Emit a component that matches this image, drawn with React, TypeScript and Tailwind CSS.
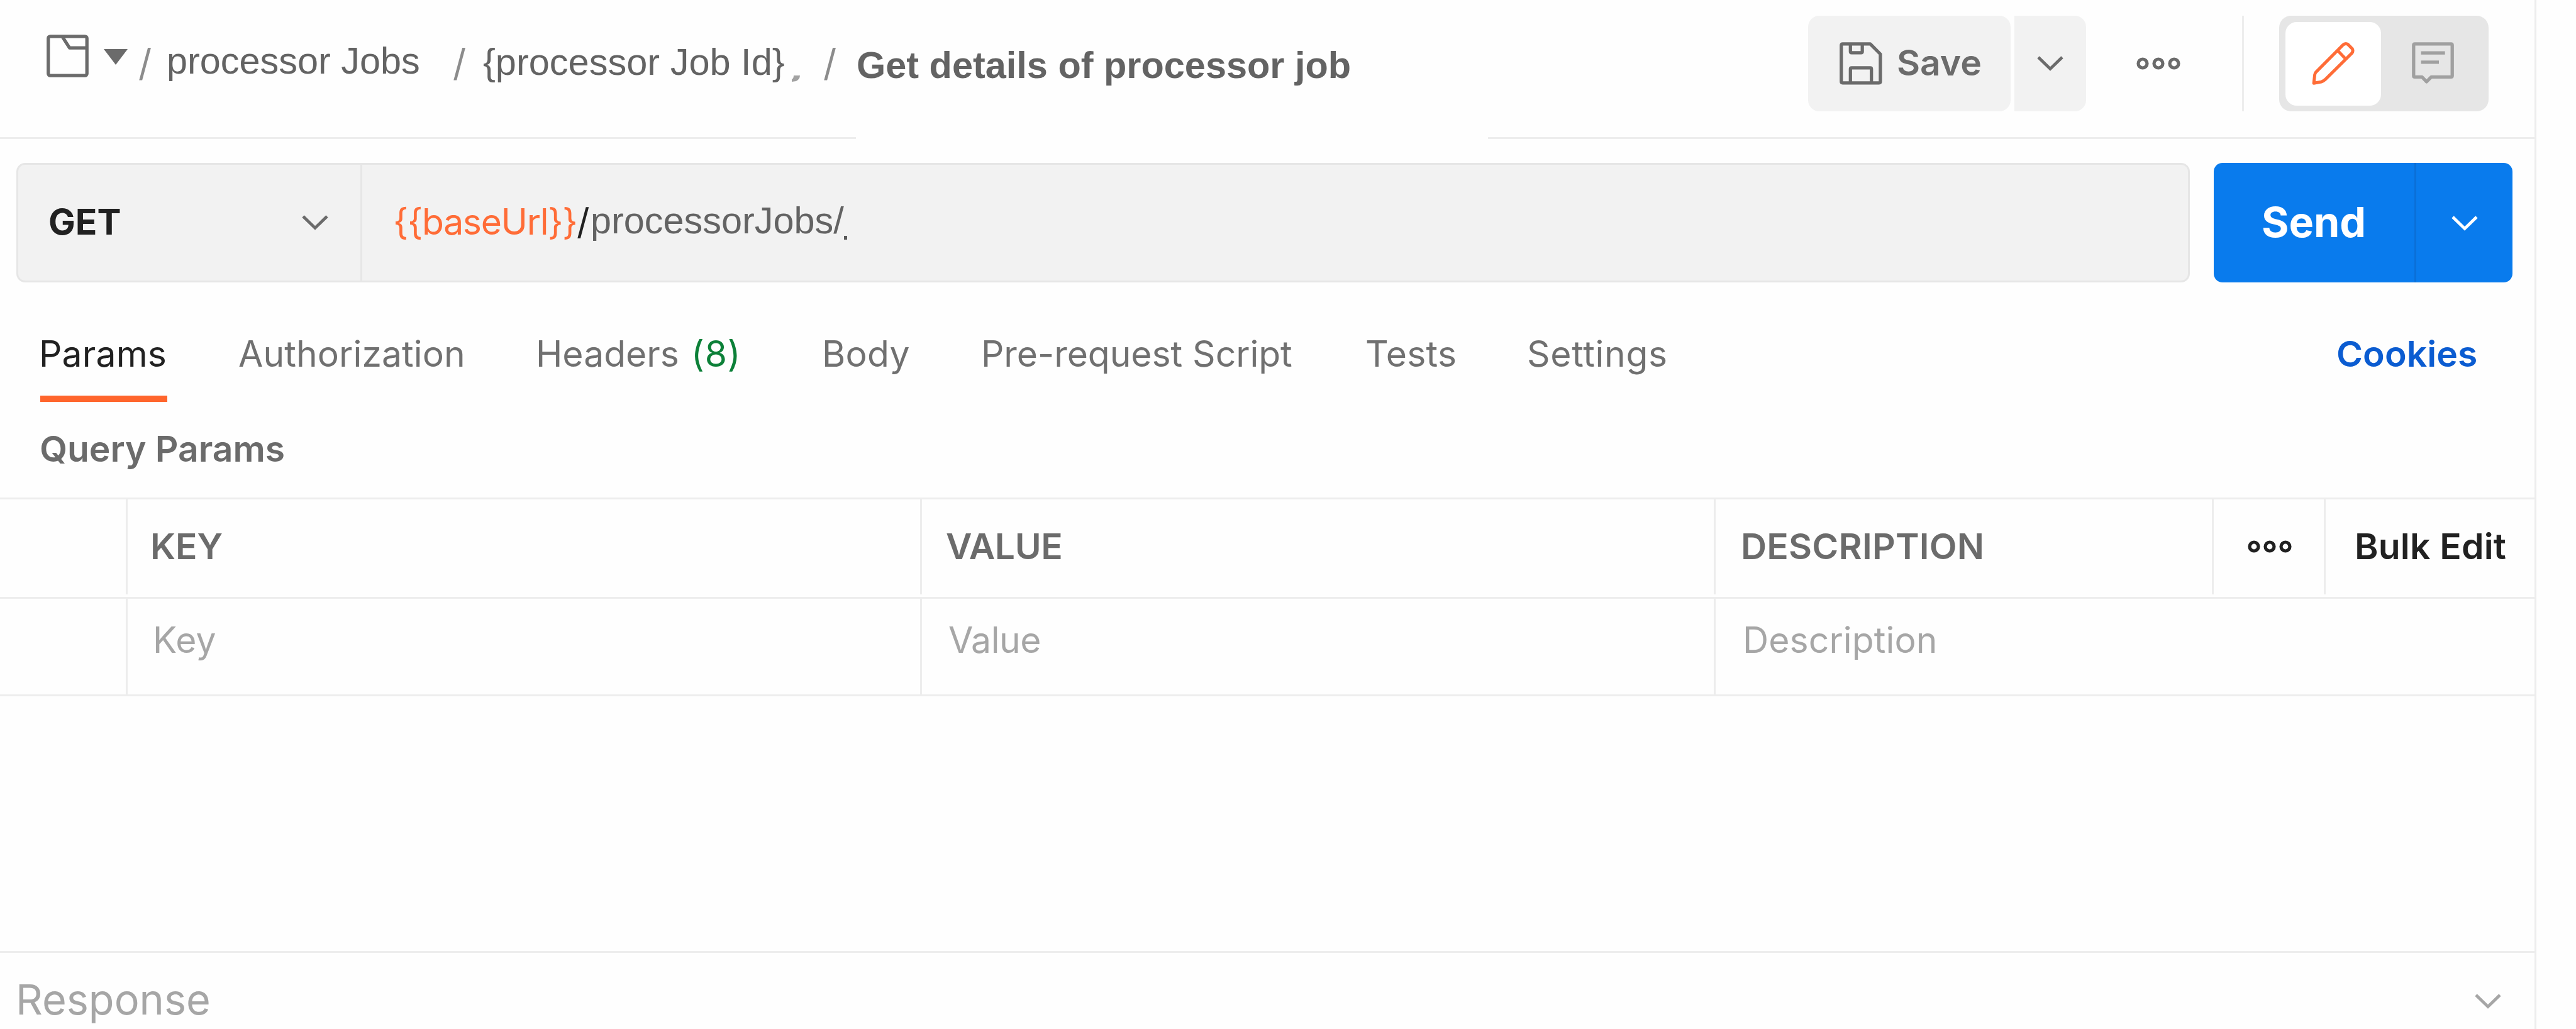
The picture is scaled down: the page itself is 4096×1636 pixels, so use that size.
import type { ReactNode } from "react";

const ARIAL = "font-['Liberation_Sans',Arial,sans-serif]";

function Chevron({ className = "" }: { className?: string }) {
  return (
    <svg className={`h-[24px] w-[42px] shrink-0 ${className}`} viewBox="0 0 42 24" fill="none" stroke="currentColor" strokeWidth="4.8">
      <path d="M2 2 L21 20.5 L40 2" />
    </svg>
  );
}

function Dots({ className = "" }: { className?: string }) {
  return (
    <svg className={`h-[20px] w-[70px] shrink-0 ${className}`} viewBox="0 0 70 20" fill="none" stroke="currentColor" strokeWidth="5.2">
      <circle cx="10" cy="10" r="7" />
      <circle cx="35" cy="10" r="7" />
      <circle cx="60" cy="10" r="7" />
    </svg>
  );
}

function CollectionIcon() {
  return (
    <svg className="mt-[55px] h-[68px] w-[67px] shrink-0" viewBox="0 0 216 219" fill="none" stroke="#6b6b6b" strokeWidth="17" strokeLinejoin="round">
      <rect x="9" y="9" width="198" height="201" rx="10" />
      <path d="M80 9 L118 68 H207" />
    </svg>
  );
}

function SaveIcon() {
  return (
    <svg className="h-[68px] w-[68px] shrink-0" viewBox="0 0 220 219" fill="none" stroke="#6b6b6b" strokeWidth="17" strokeLinejoin="round">
      <path d="M16 9 H158 L210 61 V202 Q210 209 203 209 H16 Q9 209 9 202 V16 Q9 9 16 9 Z" />
      <path d="M56 9 V48 Q56 54 62 54 H111 Q117 54 117 48 V9" />
      <path d="M56 209 V138 Q56 132 62 132 H158 Q164 132 164 138 V209" />
    </svg>
  );
}

function PencilIcon() {
  return (
    <svg className="h-[68px] w-[68px] shrink-0" viewBox="0 0 219 221" fill="none" stroke="#ff6c37" strokeWidth="16" strokeLinejoin="round">
      <path d="M9 212 L14 168 Q15 160 20 155 L158 16 Q172 3 186 12 L207 33 Q215 46 205 58 L67 194 Q58 202 48 205 Z" />
      <path d="M134 45 L172 85" />
    </svg>
  );
}

function CommentIcon() {
  return (
    <svg className="h-[67px] w-[67px] shrink-0" viewBox="0 0 215 215" fill="none" stroke="#a0a0a0" strokeWidth="17" strokeLinejoin="round">
      <path d="M15 9 H200 Q206 9 206 15 V172 Q206 178 200 178 H99 L75 202 L52 178 H15 Q9 178 9 172 V15 Q9 9 15 9 Z" />
      <path d="M47 55 H169 M47 102 H138" />
    </svg>
  );
}

function Slash({ className }: { className: string }) {
  return <span className={`mt-[66px] shrink-0 text-[59px] leading-[68px] text-[#8c8c8c] ${className}`}>/</span>;
}

function Header() {
  return (
    <header className="flex h-[218px] shrink-0 items-start pr-[73px] pl-[74px]">
      <CollectionIcon />
      <svg className="mt-[78px] ml-[24px] h-[25px] w-[38px] shrink-0" viewBox="0 0 38 25" fill="#6b6b6b">
        <path d="M0 0 H38 L19 25 Z" />
      </svg>
      <Slash className="ml-[17px] w-[45px]" />
      <span className={`mt-[63px] w-[455px] shrink-0 text-[59.4px] leading-[68px] text-[#636363] ${ARIAL}`}>processor Jobs</span>
      <Slash className="w-[48px]" />
      <span className={`mt-[65px] w-[490px] shrink-0 text-[59.5px] leading-[68px] text-[#636363] ${ARIAL}`}>{"{processor Job Id}"}</span>
      <svg className="mt-[120px] h-[10px] w-[15px] shrink-0" viewBox="0 0 15 10" fill="#a2a2a2">
        <path d="M4 0 H14 Q14 6 8 9 L1 10 V6 Q4 5 4 0 Z" />
      </svg>
      <Slash className="ml-[36px] w-[53px]" />
      <h1 className={`mt-[70px] shrink-0 text-[59.45px] leading-[68px] font-bold text-[#636363] ${ARIAL}`}>Get details of processor job</h1>

      <div className="mt-[25px] ml-auto flex h-[152px] shrink-0 items-center">
        <button className="flex h-full w-[322px] items-center rounded-[18px] bg-[#f2f2f2] pl-[50px]">
          <SaveIcon />
          <span className="ml-[23px] pb-[3px] text-[57px] leading-none font-semibold text-[#6b6b6b]">Save</span>
        </button>
        <button className="ml-[6px] flex h-full w-[114px] items-center justify-center rounded-r-[18px] bg-[#f2f2f2] text-[#6b6b6b]">
          <Chevron />
        </button>
        <Dots className="ml-[80px] text-[#6b6b6b]" />
        <div className="ml-[98px] h-full w-[3px] bg-[#ededed]" />
        <div className="ml-[56px] flex h-full w-[333px] items-center rounded-[19px] bg-[#e6e6e6] pl-[10px]">
          <button className="flex h-[133px] w-[152px] items-center justify-center rounded-[18px] bg-white">
            <PencilIcon />
          </button>
          <button className="ml-[49px] flex items-center pb-[2px]">
            <CommentIcon />
          </button>
        </div>
      </div>
    </header>
  );
}

function UrlBar() {
  return (
    <section className="flex shrink-0 px-[26px] pt-[38px]">
      <div className="flex h-[190px] w-[3456px] rounded-[14px] border-[3px] border-[#e6e6e6] bg-[#f2f2f2]">
        <div className="flex h-full w-[547px] items-center justify-between border-r-[3px] border-[#e6e6e6] pr-[51px] pl-[48px]">
          <span className="pb-[3px] text-[57px] leading-none font-bold text-[#212121]">GET</span>
          <Chevron className="text-[#6b6b6b]" />
        </div>
        <div className="flex items-center pl-[49px] leading-none">
          <span className="w-[292px] pb-[3px] text-[57px] tracking-[-1.3px] text-[#ff6c37]">{"{{baseUrl}}"}</span>
          <span className="w-[22px] pb-[3px] text-[57px] text-[#212121]">/</span>
          <span className={`pb-[7px] text-[59.4px] text-[#636363] ${ARIAL}`}>processorJobs/</span>
          <i className="mt-[47px] h-[6px] w-[5px] bg-[#5a5a5a]" />
        </div>
      </div>
      <div className="ml-[38px] flex h-[190px] w-[475px] overflow-hidden rounded-[14px] bg-[#097bed] text-white">
        <button className="flex w-[322px] items-center border-r-[3px] border-[#0a6fd8] pb-[2px] pl-[76px] text-[66.4px] leading-none font-bold">Send</button>
        <button className="flex flex-1 items-center justify-center pt-[2px]">
          <Chevron />
        </button>
      </div>
    </section>
  );
}

function Tabs() {
  return (
    <nav className="mt-[36px] flex h-[154px] shrink-0 items-center pl-[62px] text-[57px] leading-none text-[#707070]">
      <span className="relative flex h-full w-[317px] items-center tracking-[0.2px] text-[#212121]">
        Params
        <i className="absolute bottom-0 left-[2px] h-[10px] w-[202px] bg-[#ff652c]" />
      </span>
      <span className="w-[473px] tracking-[0.1px]">Authorization</span>
      <span className="w-[247px]">Headers</span>
      <span className="w-[208px] tracking-[0.9px] text-[#0c8038]">(8)</span>
      <span className="w-[253px] tracking-[0.3px]">Body</span>
      <span className="w-[611px] tracking-[-0.05px]">Pre-request Script</span>
      <span className="w-[257px] tracking-[0.3px]">Tests</span>
      <span className="tracking-[0.7px]">Settings</span>
      <span className="ml-auto w-[315px] font-semibold tracking-[0.1px] text-[#0b5cd1]">Cookies</span>
    </nav>
  );
}

function HeadCell({ className, children }: { className: string; children?: ReactNode }) {
  return <div className={`flex h-[151px] shrink-0 items-center border-l-[3px] border-[#ededed] pb-[2px] ${className}`}>{children}</div>;
}

function Cell({ className, children }: { className: string; children?: ReactNode }) {
  return <div className={`flex h-full shrink-0 items-center border-l-[3px] border-[#ededed] pb-[21px] ${className}`}>{children}</div>;
}

function ParamsTable() {
  return (
    <section className="shrink-0 text-[57px] leading-none">
      <h2 className="flex h-[152px] items-center pb-[3px] pl-[63px] font-semibold tracking-[-0.05px] text-[#6b6b6b]">Query Params</h2>
      <div className="flex h-[161px] items-start border-y-[3px] border-[#ededed] pl-[200px] font-semibold text-[#6b6b6b]">
        <HeadCell className="w-[1263px] pl-[36px]">KEY</HeadCell>
        <HeadCell className="w-[1262px] pl-[38px] tracking-[-0.4px]">VALUE</HeadCell>
        <HeadCell className="w-[792px] pl-[40px] tracking-[0.2px]">DESCRIPTION</HeadCell>
        <HeadCell className="w-[178px] pl-[54px] text-[#212121]">
          <Dots />
        </HeadCell>
        <HeadCell className="pl-[46px] tracking-[0.2px] text-[#212121]">Bulk Edit</HeadCell>
      </div>
      <div className="flex h-[155px] border-b-[3px] border-[#ededed] pl-[200px] text-[#a6a6a6]">
        <Cell className="w-[1263px] pl-[40px] tracking-[0.2px]">Key</Cell>
        <Cell className="w-[1262px] pl-[42px] tracking-[-0.4px]">Value</Cell>
        <Cell className="pl-[43px] tracking-[0.1px]">Description</Cell>
      </div>
    </section>
  );
}

export default function App() {
  return (
    <div className="h-[1636px] w-[4096px] overflow-hidden bg-[#fefefe] font-['Inter',sans-serif] whitespace-nowrap">
      <main className="flex h-full w-[4033px] flex-col border-r-[3px] border-[#ededed]">
        <Header />
        <div className="flex h-[3px] shrink-0 justify-between">
          <div className="w-[1361px] bg-[#ededed]" />
          <div className="w-[1664px] bg-[#ededed]" />
        </div>
        <UrlBar />
        <Tabs />
        <ParamsTable />
        <footer className="mt-auto flex h-[124px] shrink-0 items-start justify-between border-t-[3px] border-[#ededed] pt-[41px] pr-[53px] pl-[25px] text-[#a6a6a6]">
          <span className="text-[66.6px] leading-[66px]">Response</span>
          <Chevron className="mt-[24px]" />
        </footer>
      </main>
    </div>
  );
}
